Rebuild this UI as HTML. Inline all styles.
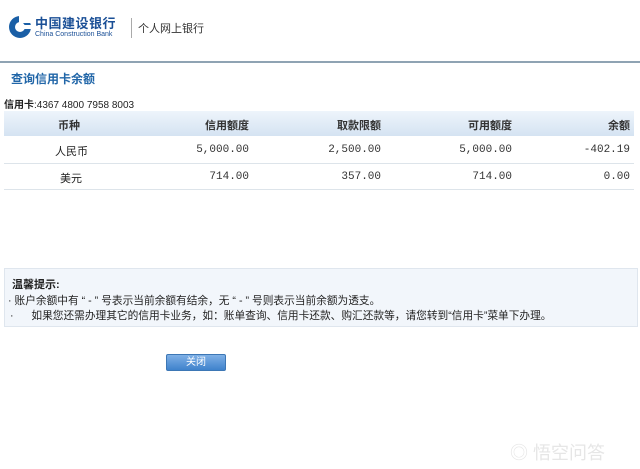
<!DOCTYPE html>
<html><head><meta charset="utf-8"><style>
body{margin:0;width:640px;height:469px;background:#fff;font-family:"Liberation Sans","Noto Sans CJK SC",sans-serif;position:relative;overflow:hidden;color:#222}
.a{position:absolute;white-space:nowrap}
.num{font-family:"Liberation Mono","Noto Sans CJK SC",monospace;font-size:11px;color:#333}
.h{font-size:11px;font-weight:bold;color:#333}
</style></head><body>
<svg class="a" style="left:8px;top:15px" width="24" height="24" viewBox="0 0 24 24"><circle cx="12" cy="12" r="11" fill="#1a5fa6"/><circle cx="12" cy="12" r="5" fill="#fff"/><rect x="11" y="0" width="13" height="8" fill="#fff"/><rect x="14" y="10" width="10" height="4" fill="#fff"/></svg>
<div class="a" style="left:35px;top:17px;font-size:13px;line-height:14px;font-weight:bold;color:#1a4f96;letter-spacing:0.5px">中国建设银行</div>
<div class="a" style="left:35px;top:31px;font-size:7px;line-height:8px;color:#1a4f96">China Construction Bank</div>
<div class="a" style="left:131px;top:18px;width:1px;height:20px;background:#aaa"></div>
<div class="a" style="left:138px;top:20px;font-size:11px;color:#333">个人网上银行</div>
<div class="a" style="left:0;top:61px;width:640px;height:2px;background:#8fa3b3"></div>
<div class="a" style="left:11px;top:70px;font-size:12px;font-weight:bold;color:#2166a8">查询信用卡余额</div>
<div class="a" style="left:4px;top:96px;font-size:10px;color:#222"><b>信用卡</b>:4367 4800 7958 8003</div>
<div class="a" style="left:4px;top:111px;width:630px;height:25px;background:linear-gradient(#eef4fb,#d5e3f2)"></div>
<div class="a h" style="left:58px;top:117px">币种</div>
<div class="a h" style="right:391px;top:117px">信用额度</div>
<div class="a h" style="right:259px;top:117px">取款限额</div>
<div class="a h" style="right:128px;top:117px">可用额度</div>
<div class="a h" style="right:10px;top:117px">余额</div>
<div class="a" style="left:55px;top:143px;font-size:11px">人民币</div>
<div class="a num" style="right:391px;top:144px">5,000.00</div>
<div class="a num" style="right:259px;top:144px">2,500.00</div>
<div class="a num" style="right:128px;top:144px">5,000.00</div>
<div class="a num" style="right:10px;top:144px">-402.19</div>
<div class="a" style="left:4px;top:163px;width:630px;height:1px;background:#dde4ea"></div>
<div class="a" style="left:60px;top:170px;font-size:11px">美元</div>
<div class="a num" style="right:391px;top:171px">714.00</div>
<div class="a num" style="right:259px;top:171px">357.00</div>
<div class="a num" style="right:128px;top:171px">714.00</div>
<div class="a num" style="right:10px;top:171px">0.00</div>
<div class="a" style="left:4px;top:189px;width:630px;height:1px;background:#dde4ea"></div>
<div class="a" style="left:4px;top:268px;width:634px;height:59px;background:#f2f6fb;border:1px solid #dfe6ee;box-sizing:border-box"></div>
<div class="a" style="left:12px;top:276px;font-size:11px;font-weight:bold">温馨提示:</div>
<div class="a" style="left:8px;top:293px;font-size:10.7px">· 账户余额中有 “ - ” 号表示当前余额有结余，无 “ - ” 号则表示当前余额为透支。</div>
<div class="a" style="left:10px;top:308px;font-size:10.7px">·&nbsp;&nbsp;&nbsp;&nbsp;&nbsp;&nbsp;如果您还需办理其它的信用卡业务，如：账单查询、信用卡还款、购汇还款等，请您转到“信用卡”菜单下办理。</div>
<div class="a" style="left:166px;top:354px;width:60px;height:17px;border:1px solid #3d77b5;border-radius:2px;background:linear-gradient(#7fb0e6,#3f82cc);box-sizing:border-box;color:#fff;font-size:10px;text-align:center;line-height:15px">关闭</div>
<div class="a" style="left:510px;top:439px;font-size:18px;color:#e6e6e6">◎ 悟空问答</div>
</body></html>
